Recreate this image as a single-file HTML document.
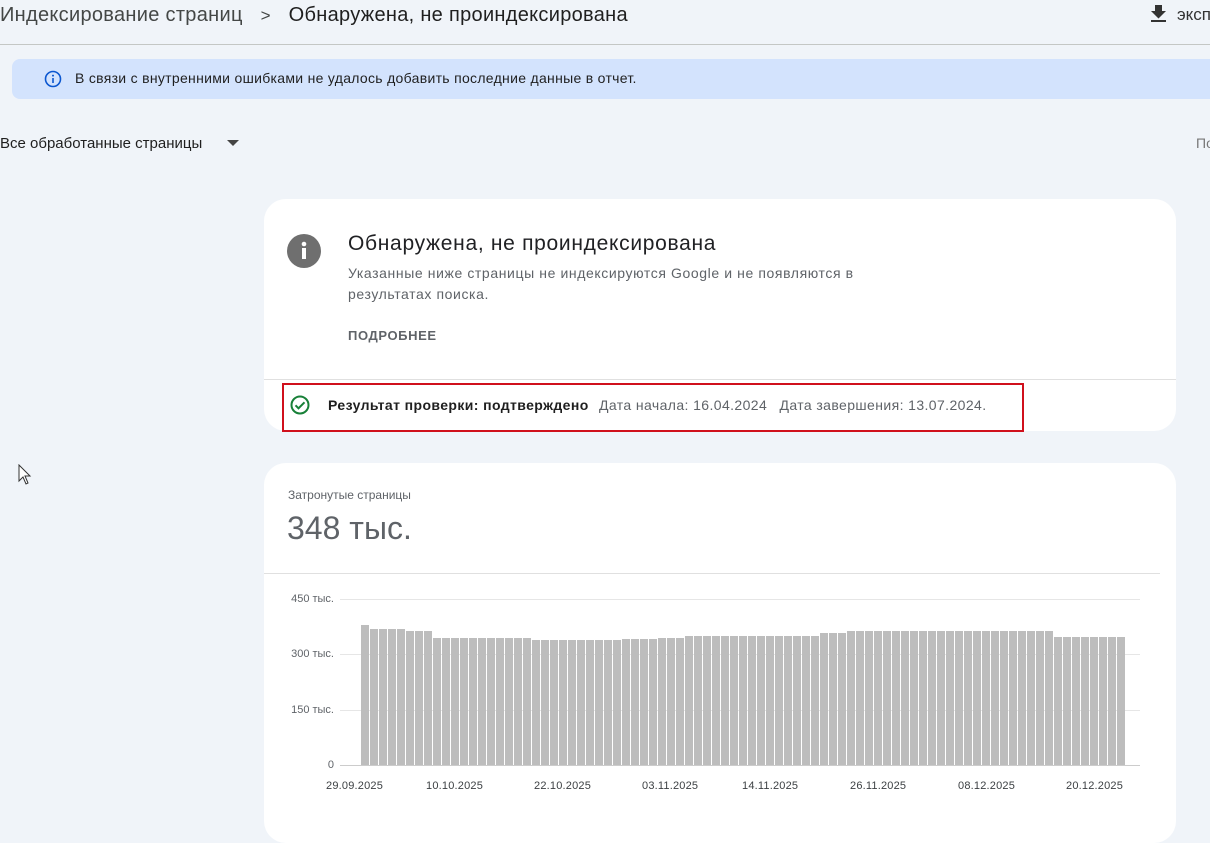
<!DOCTYPE html><html><head><meta charset="utf-8"><style>
body{margin:0;width:1210px;height:816px;overflow:hidden;background:#f0f4f9;font-family:"Liberation Sans",sans-serif;position:relative}
.a{position:absolute;white-space:nowrap}
.card{position:absolute;background:#fff;border-radius:22px}
.bars{position:absolute;left:361px;top:600px;height:165px;display:flex;align-items:flex-end;gap:1px}
.bars i{display:block;width:8px;background:#bdbdbd}
.gl{position:absolute;left:340px;width:800px;height:1px;background:#e6e6e6}
.yl{position:absolute;font-size:11px;color:#5f6368;right:876px}
.xl{position:absolute;top:780px;font-size:11px;color:#3c4043;letter-spacing:.2px}
</style></head><body>
<div class="a" style="left:0;top:4px;font-size:20px;color:#444746;letter-spacing:.3px">Индексирование страниц <span style="margin:0 12px;font-size:17px">&gt;</span> <span style="color:#1f1f1f">Обнаружена, не проиндексирована</span></div>
<svg class="a" style="left:1150px;top:5px" width="17" height="18" viewBox="0 0 17 18"><path d="M5 0h7v6h4l-7.5 7.5L1 6h4z" fill="#333"/><rect x="1" y="15" width="15" height="2" fill="#333"/></svg>
<div class="a" style="left:1177px;top:5px;font-size:17px;color:#333">экспо</div>
<div class="a" style="left:0;top:44px;width:1210px;height:1px;background:#c4c7c5"></div>
<div class="a" style="left:12px;top:59px;width:1210px;height:40px;background:#d3e3fd;border-radius:8px"></div>
<svg class="a" style="left:44px;top:70px" width="18" height="18" viewBox="0 0 18 18"><circle cx="9" cy="9" r="7.5" fill="none" stroke="#0b57d0" stroke-width="1.6"/><rect x="8.2" y="8" width="1.6" height="5" fill="#0b57d0"/><circle cx="9" cy="5.6" r="1" fill="#0b57d0"/></svg>
<div class="a" style="left:75px;top:70px;font-size:14px;color:#1f1f1f;letter-spacing:.3px">В связи с внутренними ошибками не удалось добавить последние данные в отчет.</div>
<div class="a" style="left:0;top:135px;font-size:15px;color:#1f1f1f">Все обработанные страницы</div>
<svg class="a" style="left:227px;top:140px" width="12" height="7"><path d="M0 0h12L6 6z" fill="#444"/></svg>
<div class="a" style="left:1196px;top:135px;font-size:14px;color:#777">По</div>
<svg class="a" style="left:18px;top:464px" width="14" height="22" viewBox="0 0 14 22"><path d="M1 1v16l4-4 3 7 2-1-3-7h5z" fill="#fff" stroke="#333" stroke-width="1"/></svg>

<div class="card" style="left:264px;top:199px;width:912px;height:232px"></div>
<svg class="a" style="left:287px;top:234px" width="34" height="34"><circle cx="17" cy="17" r="17" fill="#6f6f6f"/><rect x="15" y="14" width="4" height="11" fill="#fff"/><circle cx="17" cy="10" r="2.3" fill="#fff"/></svg>
<div class="a" style="left:348px;top:232px;font-size:21px;color:#202124;letter-spacing:.7px">Обнаружена, не проиндексирована</div>
<div class="a" style="left:348px;top:263px;font-size:14px;color:#5f6368;line-height:21px;letter-spacing:.6px">Указанные ниже страницы не индексируются Google и не появляются в<br>результатах поиска.</div>
<div class="a" style="left:348px;top:328px;font-size:13px;color:#5f6368;font-weight:bold;letter-spacing:.6px">ПОДРОБНЕЕ</div>
<div class="a" style="left:264px;top:379px;width:912px;height:1px;background:#e0e0e0"></div>
<div class="a" style="left:282px;top:383px;width:738px;height:45px;border:2px solid #d0101c"></div>
<svg class="a" style="left:290px;top:395px" width="20" height="20"><circle cx="10" cy="10" r="8.5" fill="none" stroke="#188038" stroke-width="2"/><path d="M5.5 10.3l3 3 6-6" fill="none" stroke="#188038" stroke-width="2"/></svg>
<div class="a" style="left:328px;top:397px;font-size:14px;color:#1f1f1f;letter-spacing:.4px"><b>Результат проверки: подтверждено</b> <span style="color:#5f6368;margin-left:6px">Дата начала: 16.04.2024</span> <span style="color:#5f6368;margin-left:8px">Дата завершения: 13.07.2024.</span></div>

<div class="card" style="left:264px;top:463px;width:912px;height:380px"></div>
<div class="a" style="left:288px;top:488px;font-size:12px;color:#5f6368">Затронутые страницы</div>
<div class="a" style="left:287px;top:510px;font-size:32px;color:#5f6368">348 тыс.</div>
<div class="a" style="left:264px;top:573px;width:896px;height:1px;background:#e0e0e0"></div>
<div class="gl" style="top:599px"></div><div class="gl" style="top:654px"></div><div class="gl" style="top:710px"></div><div class="gl" style="top:765px;background:#ccc"></div>
<div class="yl" style="top:593px">450 тыс.</div><div class="yl" style="top:648px">300 тыс.</div><div class="yl" style="top:704px">150 тыс.</div><div class="yl" style="top:759px">0</div>
<div class="bars">
<i style="height:140px"></i><i style="height:136px"></i><i style="height:136px"></i><i style="height:136px"></i><i style="height:136px"></i><i style="height:134px"></i><i style="height:134px"></i><i style="height:134px"></i>
<i style="height:127px"></i><i style="height:127px"></i><i style="height:127px"></i><i style="height:127px"></i><i style="height:127px"></i><i style="height:127px"></i><i style="height:127px"></i><i style="height:127px"></i><i style="height:127px"></i><i style="height:127px"></i><i style="height:127px"></i>
<i style="height:125px"></i><i style="height:125px"></i><i style="height:125px"></i><i style="height:125px"></i><i style="height:125px"></i><i style="height:125px"></i><i style="height:125px"></i><i style="height:125px"></i><i style="height:125px"></i><i style="height:125px"></i>
<i style="height:126px"></i><i style="height:126px"></i><i style="height:126px"></i><i style="height:126px"></i>
<i style="height:127px"></i><i style="height:127px"></i><i style="height:127px"></i>
<i style="height:129px"></i><i style="height:129px"></i><i style="height:129px"></i><i style="height:129px"></i><i style="height:129px"></i><i style="height:129px"></i><i style="height:129px"></i><i style="height:129px"></i><i style="height:129px"></i><i style="height:129px"></i><i style="height:129px"></i><i style="height:129px"></i><i style="height:129px"></i><i style="height:129px"></i><i style="height:129px"></i>
<i style="height:132px"></i><i style="height:132px"></i><i style="height:132px"></i>
<i style="height:134px"></i><i style="height:134px"></i><i style="height:134px"></i><i style="height:134px"></i><i style="height:134px"></i><i style="height:134px"></i><i style="height:134px"></i><i style="height:134px"></i><i style="height:134px"></i><i style="height:134px"></i><i style="height:134px"></i><i style="height:134px"></i><i style="height:134px"></i><i style="height:134px"></i><i style="height:134px"></i><i style="height:134px"></i><i style="height:134px"></i><i style="height:134px"></i><i style="height:134px"></i><i style="height:134px"></i><i style="height:134px"></i><i style="height:134px"></i><i style="height:134px"></i>
<i style="height:128px"></i><i style="height:128px"></i><i style="height:128px"></i><i style="height:128px"></i><i style="height:128px"></i><i style="height:128px"></i><i style="height:128px"></i><i style="height:128px"></i>
</div>
<div class="xl" style="left:326px">29.09.2025</div><div class="xl" style="left:426px">10.10.2025</div><div class="xl" style="left:534px">22.10.2025</div><div class="xl" style="left:642px">03.11.2025</div><div class="xl" style="left:742px">14.11.2025</div><div class="xl" style="left:850px">26.11.2025</div><div class="xl" style="left:958px">08.12.2025</div><div class="xl" style="left:1066px">20.12.2025</div>
</body></html>
